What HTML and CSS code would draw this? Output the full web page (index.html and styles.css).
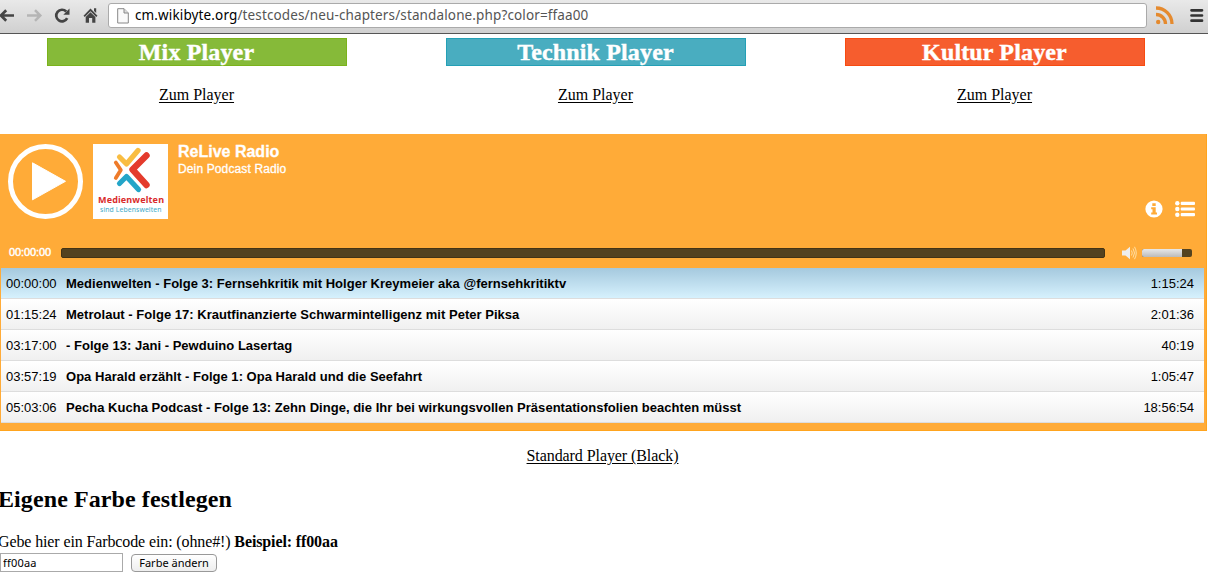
FILE: index.html
```html
<!DOCTYPE html>
<html lang="de">
<head>
<meta charset="utf-8">
<title>Standalone Player</title>
<link rel="stylesheet" href="styles.css">
</head>
<body>
<header class="toolbar">
  <svg class="nav-icons" width="108" height="32" viewBox="0 0 108 32" fill="none">
    <path d="M14 15.500H1M6.200 10.200L1 15.500L6.200 20.800" stroke="#444" stroke-width="2.700"/>
    <path d="M27 15.500H39.500M35 10.200L40.300 15.500L35 20.800" stroke="#b5b5b5" stroke-width="2.500"/>
    <path d="M67.200 18.200A5.800 5.800 0 1 1 66.200 11.500" stroke="#444" stroke-width="2.700"/>
    <path d="M69.500 8.500V14.700H63.300Z" fill="#444"/>
    <path d="M83.500 15.800L90.500 8.500L97.500 15.800L96.200 17L90.500 11.200L84.800 17Z" fill="#444"/>
    <path d="M94 8.300H96.200V13L94 11Z" fill="#444"/>
    <path d="M85.700 17L90.500 12.300L95.400 17V22.800H92.200V18H89V22.800H85.700Z" fill="#444"/>
  </svg>
  <div class="address">
    <svg width="12" height="16" viewBox="0 0 12 16" fill="#fafafa" stroke="#888"><path d="M.7.700H7L11.300 5V15H.7Z"/><path d="M7 .7V5H11.300" fill="#ddd"/></svg>
    <span class="url"><b>cm.wikibyte.org</b>/testcodes/neu-chapters/standalone.php?color=ffaa00</span>
  </div>
  <svg class="tool-icons" width="61" height="32" viewBox="0 0 61 32" fill="none">
    <g stroke="#e58a2e" stroke-width="3.300"><path d="M9 8A16 16 0 0 1 25 24"/><path d="M9 14.500A9.500 9.500 0 0 1 18.500 24"/></g>
    <circle cx="11.200" cy="22" r="2.200" fill="#e58a2e"/>
    <path d="M44.500 10.300H55M44.500 15.500H55M44.500 20.700H55" stroke="#333" stroke-width="2.700" stroke-linecap="round"/>
  </svg>
</header>

<nav class="players">
  <div class="choice"><h2 class="mix"><span>Mix Player</span></h2><a><span>Zum Player</span></a></div>
  <div class="choice"><h2 class="technik"><span>Technik Player</span></h2><a><span>Zum Player</span></a></div>
  <div class="choice"><h2 class="kultur"><span>Kultur Player</span></h2><a><span>Zum Player</span></a></div>
</nav>

<section class="player">
  <div class="info">
    <svg class="play" width="76" height="76" viewBox="0 0 76 76"><circle cx="37.500" cy="37.500" r="35" fill="none" stroke="#fff" stroke-width="5"/><path d="M24.500 18.800L57.500 37.300L24.500 55.800Z" fill="#fff" stroke="#fff" stroke-linejoin="round"/></svg>
    <svg class="cover" width="75" height="75" viewBox="0 0 75 75">
      <path fill="#fff" d="M0 0H75V75H0Z"/>
      <g fill="none" stroke-width="5.200" stroke-linecap="round" stroke-linejoin="round">
        <path d="M22.800 18.500L27.800 26L22.800 34" stroke="#ee7b2a" stroke-width="3.800"/>
        <path d="M26.500 13L33.500 20L45 6.500" stroke="#f9bd42"/>
        <path d="M26.500 39.500L33.500 32.500L45.500 45.500" stroke="#23a5c8"/>
        <path d="M53.500 11.500L39.500 25.500L53.500 41" stroke="#e43b2c" stroke-width="6.400"/>
      </g>
      <text x="5" y="59.300" textLength="66" class="logo-name">Medienwelten</text>
      <text x="7" y="68" textLength="61.500" class="logo-claim">sind Lebenswelten</text>
    </svg>
    <div class="titles"><h3>ReLive Radio</h3><p>Dein Podcast Radio</p></div>
    <div class="toggles">
      <svg width="18" height="18" viewBox="0 0 18 18"><circle cx="9" cy="9" r="8.600" fill="#fff"/><path d="M7.300 3.200H10.700V6H7.300ZM6.200 7.300H10.700V12.400H12V14.400H6.200V12.400H7.500V9.200H6.200Z" fill="#ffab38"/></svg>
      <svg width="20" height="16" viewBox="0 0 20 16" fill="#fff"><circle cx="2.300" cy="2.300" r="2.200"/><circle cx="2.300" cy="8" r="2.200"/><circle cx="2.300" cy="13.700" r="2.200"/><rect x="5.700" y=".8" width="14.300" height="3.200" rx="1"/><rect x="5.700" y="6.400" width="14.300" height="3.200" rx="1"/><rect x="5.700" y="12" width="14.300" height="3.200" rx="1"/></svg>
    </div>
  </div>
  <div class="controls">
    <span class="clock">00:00:00</span>
    <div class="rail"></div>
    <svg class="speaker" width="15" height="14" viewBox="0 0 15 14" fill="none"><path d="M0 4.500H3.500L8 .8V13.200L3.500 9.500H0Z" fill="#eee"/><path d="M9.500 4.500Q11 7 9.500 9.500M11 2.500Q14 7 11 11.500M12.500 .8Q16 7 12.500 13.200" stroke="#ffe0a6"/></svg>
    <div class="volume"><div class="level"></div></div>
  </div>
  <ol class="chapters">
    <li class="active"><time>00:00:00</time><b><span>Medienwelten - Folge 3: Fernsehkritik mit Holger Kreymeier aka @fernsehkritiktv</span></b><time>1:15:24</time></li>
    <li><time>01:15:24</time><b><span>Metrolaut - Folge 17: Krautfinanzierte Schwarmintelligenz mit Peter Piksa</span></b><time>2:01:36</time></li>
    <li><time>03:17:00</time><b><span>- Folge 13: Jani - Pewduino Lasertag</span></b><time>40:19</time></li>
    <li><time>03:57:19</time><b><span>Opa Harald erzählt - Folge 1: Opa Harald und die Seefahrt</span></b><time>1:05:47</time></li>
    <li><time>05:03:06</time><b><span>Pecha Kucha Podcast - Folge 13: Zehn Dinge, die Ihr bei wirkungsvollen Präsentationsfolien beachten müsst</span></b><time>18:56:54</time></li>
  </ol>
</section>

<p class="standard"><a>Standard Player (Black)</a></p>

<section class="custom">
  <h2>Eigene Farbe festlegen</h2>
  <p>Gebe hier ein Farbcode ein: (ohne#!) <b>Beispiel: ff00aa</b></p>
  <form class="fields"><input type="text" value="ff00aa"><button type="button">Farbe ändern</button></form>
</section>
</body>
</html>
```
FILE: styles.css
```css
* { box-sizing: border-box; }
body { margin: 0; width: 1208px; height: 576px; overflow: hidden; background: #fff; color: #000; font: 16px/18px "Liberation Serif", serif; }
svg { display: block; flex: none; }
h2, h3, p, ol { margin: 0; padding: 0; }

.toolbar { height: 34px; display: flex; align-items: flex-start; background: linear-gradient(#e9e9e9, #d0d0d0); border-bottom: 1px solid #555; }
.address { width: 1039px; height: 25px; margin-top: 3px; padding-left: 8px; display: flex; align-items: center; gap: 6px; background: #fff; border: 1px solid #aaa; border-radius: 3px; }
.url { font: 13.5px/20px "Noto Sans", sans-serif; letter-spacing: .13px; color: #555; white-space: nowrap; padding-bottom: 2px; }
.url b { font-weight: 400; color: #000; }

.players { display: grid; grid-template-columns: repeat(3, 399px); margin-left: -3px; padding-top: 4px; height: 100px; }
.choice { display: flex; flex-direction: column; align-items: center; gap: 20px; }
.choice h2 { width: 300px; height: 28px; border: 1px solid; color: #fff; font-size: 24px; line-height: 27px; letter-spacing: .15px; text-align: center; -webkit-text-stroke: .4px #fff; }
.choice h2.mix { background: #86ba39; border-color: #7bb31b; }
.choice h2.technik { background: #49adc0; border-color: #24a0b6; }
.choice h2.kultur { background: #f65d2e; border-color: #f74b11; }
a { text-decoration: underline; text-underline-offset: 2px; }

.player { width: 1207px; height: 297px; padding: 10px 2px 8px 0; background: #ffab38; border: 1px solid #ffa41e; border-width: 0 1px 1px 0; font-family: "Liberation Sans", Arial, sans-serif; }
.info { height: 98px; padding-left: 8px; display: flex; }
.cover { margin-left: 9px; }
.logo-name { font: 700 9px "Noto Sans", sans-serif; fill: #d92b2b; }
.logo-claim { font: 6.800px "Noto Sans", sans-serif; fill: #3ba9c6; }
.titles { margin-left: 10px; color: #fff; }
.titles h3 { font-size: 16px; line-height: 16px; -webkit-text-stroke: .3px #fff; }
.titles p { font-size: 12px; line-height: 19px; letter-spacing: .13px; -webkit-text-stroke: .3px #fff; }
.toggles { margin: 56px 9px 0 auto; height: 18px; display: flex; align-items: center; gap: 12px; }
.controls { height: 26px; padding-left: 9px; display: flex; align-items: flex-start; padding-top: 4px; }
.clock { width: 52px; color: #fff; font-size: 11px; line-height: 14px; letter-spacing: -.1px; -webkit-text-stroke: .45px #fff; margin-top: -1px; }
.rail { width: 1044px; height: 10px; margin-top: 2px; border-radius: 2px; background: #54421f; border: 1px solid #433315; }
.speaker { margin: 0 5px 0 17px; }
.volume { width: 50px; height: 8px; margin-top: 3px; border-radius: 2px; background: #54421f; overflow: hidden; }
.level { width: 40px; height: 8px; background: linear-gradient(#e8e8e8, #bbb); }

.chapters { width: 1203px; margin-left: 1px; list-style: none; font-size: 13px; }
.chapters li { height: 31px; padding: 2px 10px 0 5px; display: flex; align-items: center; border-bottom: 1px solid #ddd; background: linear-gradient(#fff, #f0f0f0); white-space: nowrap; }
.chapters li.active { background: linear-gradient(#a5c9de, #d6f1fd); }
.chapters time:first-child { width: 60px; }
.chapters b { flex: 1; letter-spacing: .025px; }

.standard { margin-top: 16px; margin-left: -3px; text-align: center; letter-spacing: -.08px; }
.custom { margin-left: -2px; padding-top: 20px; }
.custom h2 { font-size: 24px; line-height: 28px; letter-spacing: .09px; }
.custom p { margin-top: 20px; line-height: 18px; letter-spacing: -.12px; }
.fields { display: flex; align-items: flex-start; gap: 8px; margin: 2px 0 0 2px; }
.fields input { width: 123px; height: 19px; padding: 0 2px 1px; border: 1px solid #aaa; border-radius: 0; background: #fff; font: 11px "Noto Sans", sans-serif; letter-spacing: .2px; color: #000; }
.fields button { width: 86px; height: 18px; margin-top: 1px; padding: 0 0 1px; border: 1px solid #999; border-radius: 4px; background: linear-gradient(#fff, #eee); font: 11px/14px "Noto Sans", sans-serif; color: #000; }
```
